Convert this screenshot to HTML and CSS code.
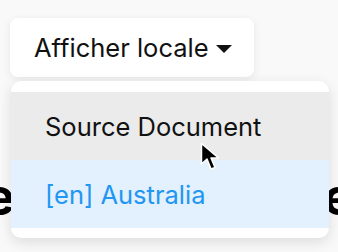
FILE: index.html
```html
<!DOCTYPE html>
<html lang="fr">
<head>
  <meta charset="UTF-8" />
  <title>Afficher locale</title>
  <link rel="stylesheet" href="styles.css">
</head>
<body>

  <div id="picker">
    <button class="toggle"><span class="label">Afficher locale</span><span class="caret"></span></button>

    <ul class="menu">
      <li class="item hover">Source Document</li>
      <li class="item active">[en] Australia</li>
    </ul>

    <svg class="cursor" width="22" height="32" viewBox="0 0 22 32">
      <path d="M1.5 1.5 L1.5 22 L7 17 L11 27 L15 25.5 L11 16 L18.5 16 Z" fill="#000" stroke="#fff" stroke-width="1.5" stroke-linejoin="round"/>
    </svg>
  </div>

  <div class="heading-wrap">
    <h1 class="title"><span>e</span><span>e</span></h1>
  </div>

</body>
</html>
```

FILE: styles.css
```css
html, body {
  height: 100%;
}
body {
  font-family: Inter, "Noto Sans", sans-serif;
  background-color: #f9f9f9;
  margin: 0; padding: 0;
}
#picker {
  position: relative;
  padding: 18px 0 0 10px;
}
.toggle {
  display: flex;
  align-items: center;
  gap: 7px;
  height: 59px;
  width: 244px;
  padding: 0 0 0 24px;
  font-family: inherit;
  font-size: 25.5px;
  white-space: nowrap;
  color: #111;
  background: white;
  border: none;
  border-radius: 8px;
  box-shadow: 0 2px 8px rgba(0,0,0,0.08);
}
.caret {
  flex: none;
  width: 0; height: 0;
  border-left: 8px solid transparent;
  border-right: 8px solid transparent;
  border-top: 8px solid #111;
  margin-top: 2px;
}
.menu {
  position: absolute;
  top: 81px;
  left: 11px;
  width: 318px;
  margin: 0;
  padding: 11px 0 10px;
  list-style: none;
  background: white;
  border-radius: 10px;
  box-shadow: 0 4px 14px rgba(0,0,0,0.12);
  z-index: 2;
}
.item {
  height: 68px;
  display: flex;
  align-items: center;
  padding-left: 34px;
  font-size: 25.5px;
  color: #111;
}
.item.hover {
  background: #ebebeb;
}
.item.active {
  background: #e3f0fd;
  color: #2196f3;
}
.cursor {
  position: absolute;
  top: 142px;
  left: 200px;
  z-index: 3;
}
.heading-wrap {
  overflow: hidden;
  width: 100%;
}
.title {
  display: flex;
  justify-content: space-between;
  margin: 94px -16px 0 -16px;
  font-size: 52px;
  font-weight: 700;
  line-height: 1;
  color: #000;
}
```
